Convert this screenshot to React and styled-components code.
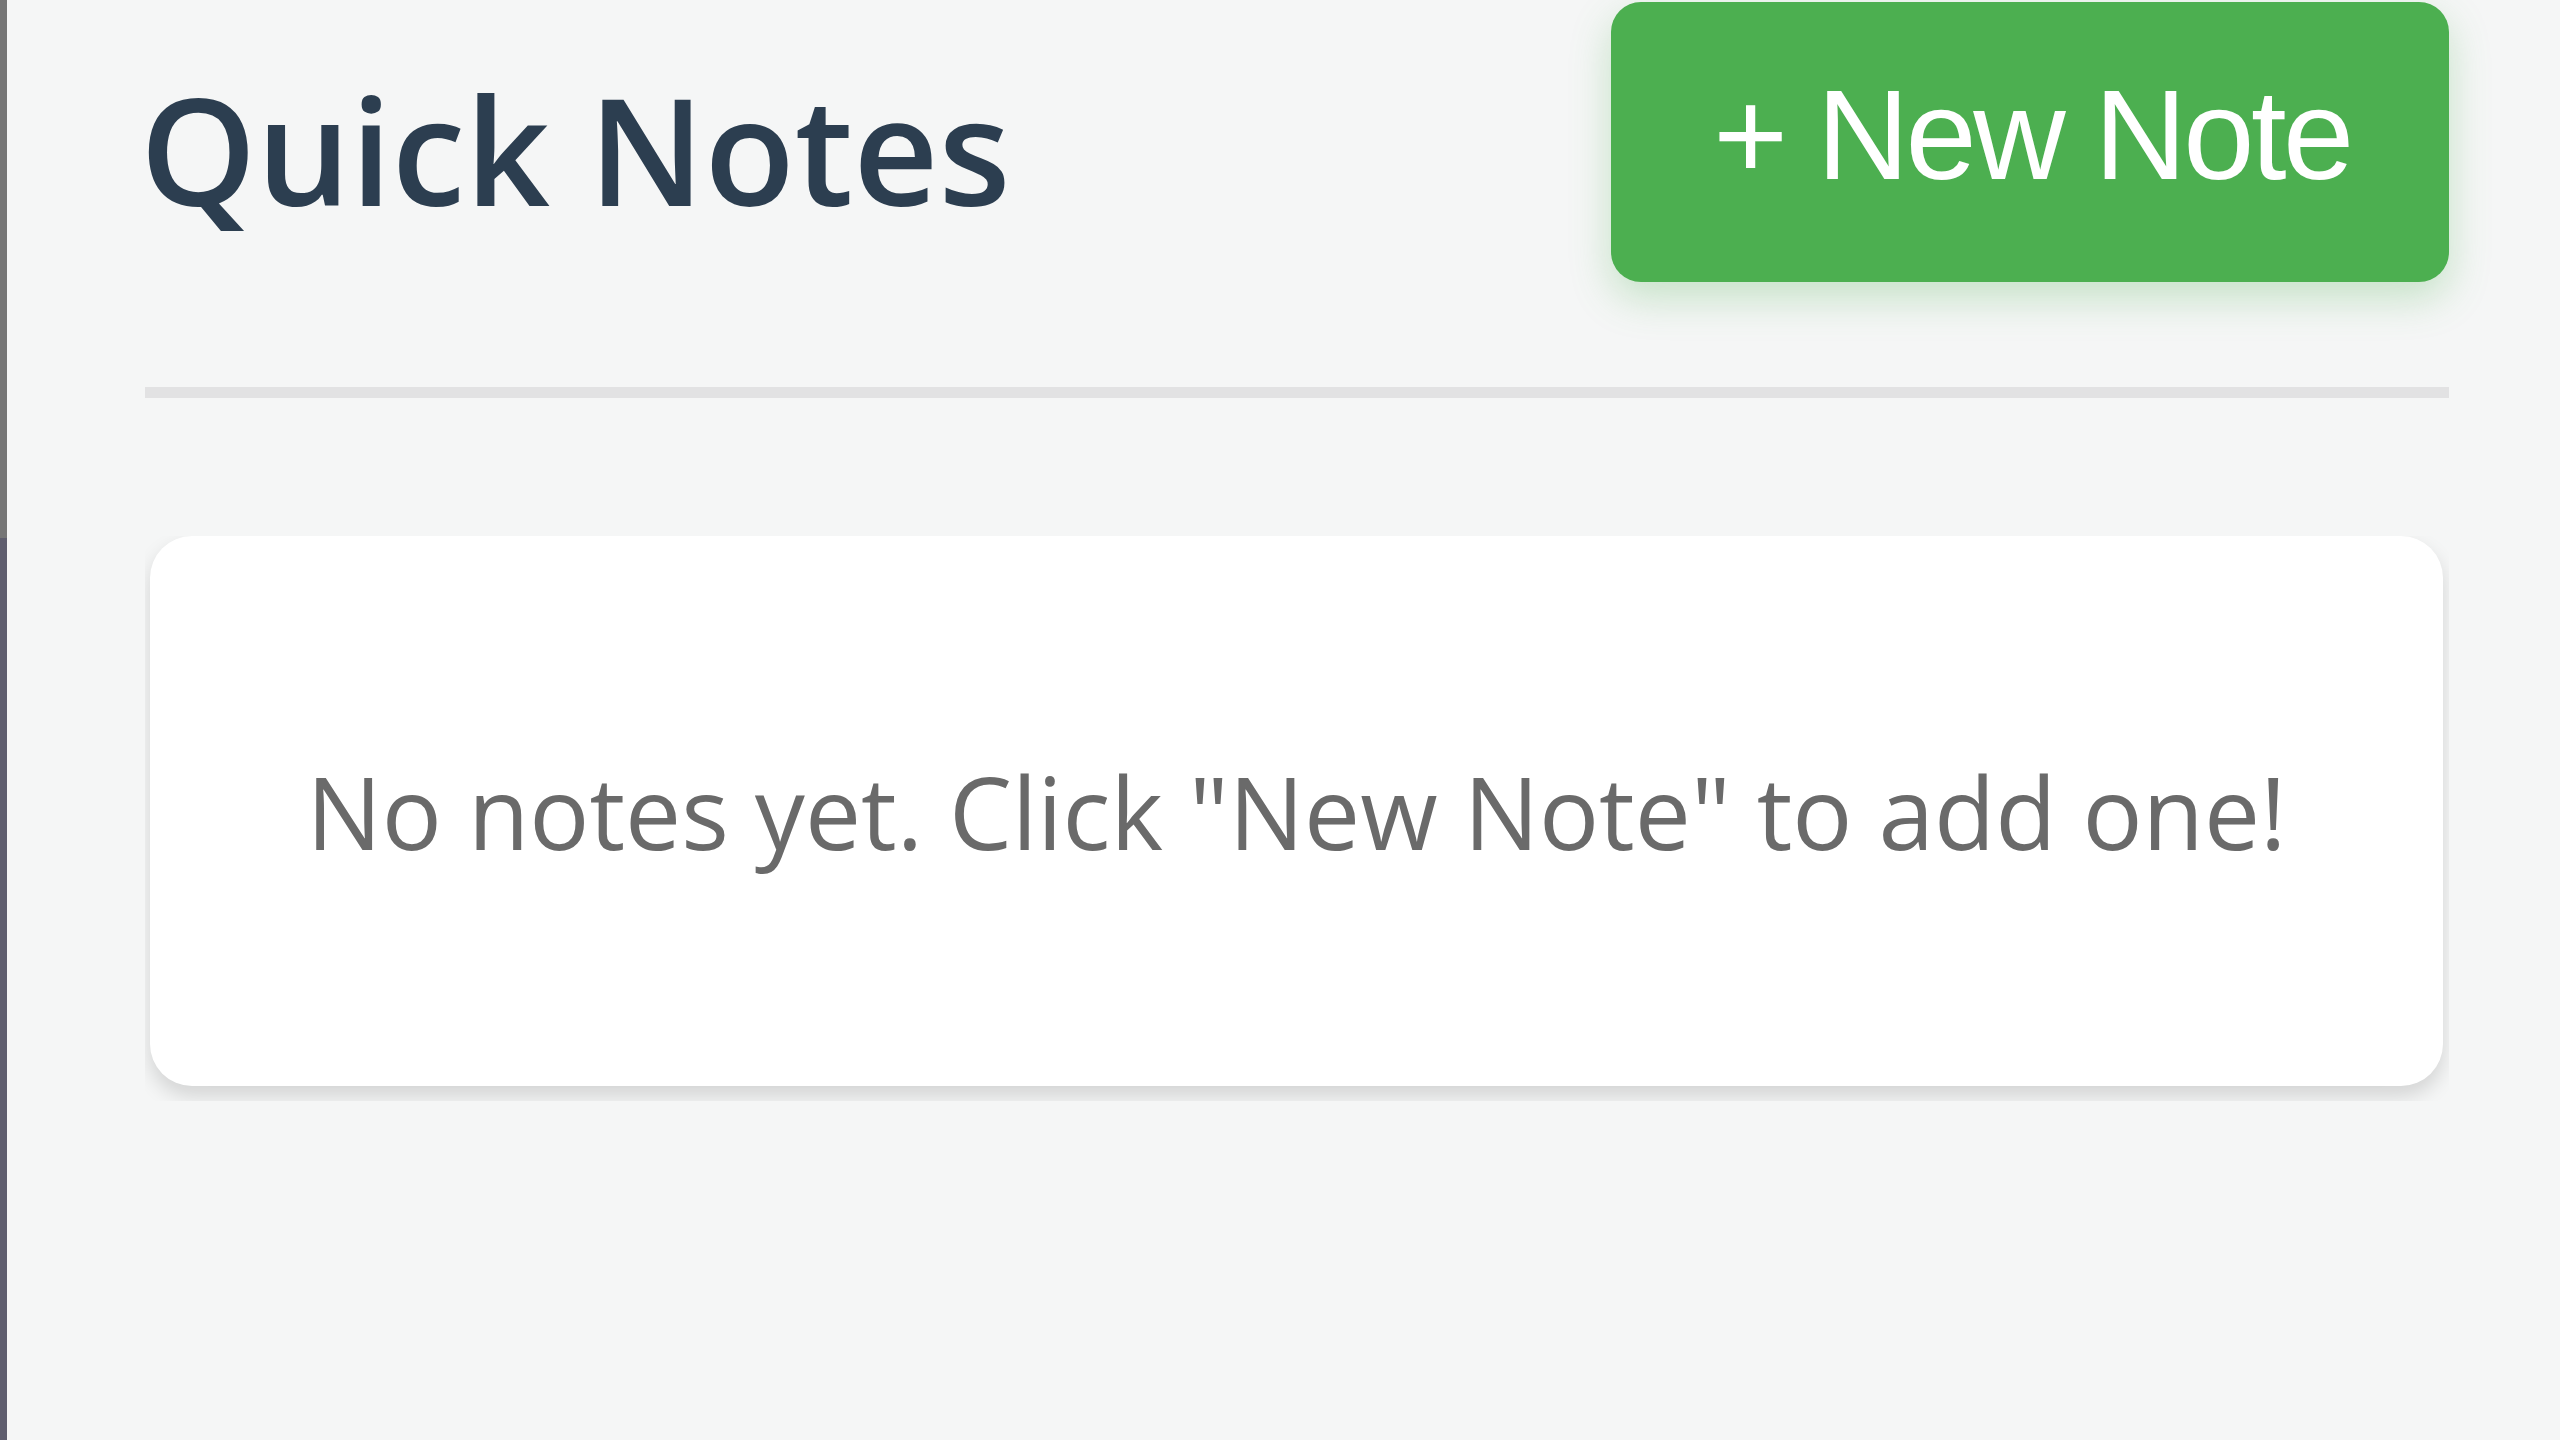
import React from 'react';
import styled, { createGlobalStyle } from 'styled-components';

const GlobalStyle = createGlobalStyle`
  html, body { margin: 0; padding: 0; }
  body {
    background: #f5f6f6;
    font-family: "Open Sans", "Liberation Sans", sans-serif;
  }
`;

const Shell = styled.div`
  display: flex;
  min-height: 100vh;
`;

const SideStrip = styled.div`
  flex: 0 0 7px;
  background: linear-gradient(#767676 0, #767676 538px, #5f5e6e 538px);
`;

const Main = styled.main`
  width: 2304px;
  margin-left: 138px;
  padding-top: 2px;
`;

const Header = styled.header`
  display: flex;
  justify-content: space-between;
  align-items: center;
  padding-bottom: 105px;
  border-bottom: 11px solid #e2e2e3;
`;

const Title = styled.h1`
  margin: 14px 0 0 -5px;
  font-size: 148px;
  font-weight: 600;
  line-height: 1;
  color: #2c3e50;
`;

const NewButton = styled.button`
  display: flex;
  align-items: center;
  justify-content: center;
  width: 838px;
  height: 280px;
  padding: 0 0 16px 4px;
  border: none;
  border-radius: 30px;
  background: #4caf50;
  color: #fff;
  font-family: "Liberation Sans", Arial, sans-serif;
  font-size: 128px;
  letter-spacing: -3.5px;
  box-shadow: 0 16px 40px rgba(76, 175, 80, 0.28);
  cursor: pointer;
`;

const CardClip = styled.section`
  margin-top: 138px;
  overflow: hidden;
  padding: 0 6px 15px 5px;
`;

const EmptyCard = styled.div`
  display: flex;
  align-items: center;
  justify-content: center;
  height: 550px;
  background: #fff;
  border-radius: 42px;
  box-shadow: 0 10px 20px rgba(0, 0, 0, 0.14);
`;

const EmptyText = styled.p`
  margin: 0;
  font-size: 100px;
  color: #6a6a6a;
`;

export default function App() {
  return (
    <>
      <GlobalStyle />
      <Shell>
        <SideStrip />
        <Main>
          <Header>
            <Title>Quick Notes</Title>
            <NewButton>+ New Note</NewButton>
          </Header>
          <CardClip>
            <EmptyCard>
              <EmptyText>No notes yet. Click "New Note" to add one!</EmptyText>
            </EmptyCard>
          </CardClip>
        </Main>
      </Shell>
    </>
  );
}
